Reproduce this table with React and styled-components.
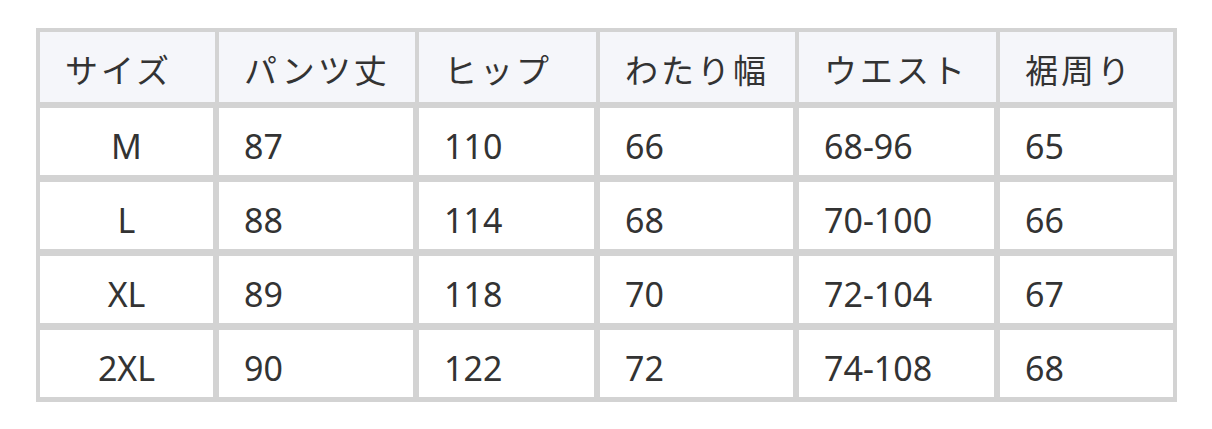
import React from 'react';
import styled, { createGlobalStyle } from 'styled-components';

const GlobalStyle = createGlobalStyle`
  body {
    margin: 0;
    background: #ffffff;
    font-family: "Noto Sans", "Noto Sans CJK JP", sans-serif;
  }
`;

const Page = styled.div`
  padding: 28px 0 0 36px;
`;

const Grid = styled.div`
  display: grid;
  grid-template-columns: 175px 196px 177px 195px 197px 173px;
  grid-auto-rows: 70px;
  gap: 4px;
  padding: 4px;
  width: max-content;
  background: #d3d3d3;
`;

const HeadCell = styled.div`
  display: flex;
  align-items: center;
  padding: 4px 0 0 25px;
  background: #f5f6fa;
  color: #333333;
  font-size: 33px;
  letter-spacing: 3px;
  white-space: nowrap;
`;

const Cell = styled.div`
  display: flex;
  align-items: center;
  justify-content: ${p => (p.center ? 'center' : 'flex-start')};
  padding: 9px 0 0 ${p => (p.center ? '0' : '25px')};
  box-sizing: border-box;
  background: #ffffff;
  border-top: 2px solid #d3d3d3;
  border-bottom: 1px solid #d3d3d3;
  border-right: ${p => (p.last ? '0' : '2px solid #d3d3d3')};
  color: #333333;
  font-size: 34px;
  white-space: nowrap;
`;

const headers = ['サイズ', 'パンツ丈', 'ヒップ', 'わたり幅', 'ウエスト', '裾周り'];

const rows = [
  ['M', '87', '110', '66', '68-96', '65'],
  ['L', '88', '114', '68', '70-100', '66'],
  ['XL', '89', '118', '70', '72-104', '67'],
  ['2XL', '90', '122', '72', '74-108', '68'],
];

const App = () => (
  <Page>
    <GlobalStyle />
    <Grid>
      {headers.map(h => (
        <HeadCell key={h}>{h}</HeadCell>
      ))}
      {rows.map(row =>
        row.map((v, i) => (
          <Cell key={row[0] + i} center={i === 0} last={i === row.length - 1}>
            {v}
          </Cell>
        ))
      )}
    </Grid>
  </Page>
);

export default App;
